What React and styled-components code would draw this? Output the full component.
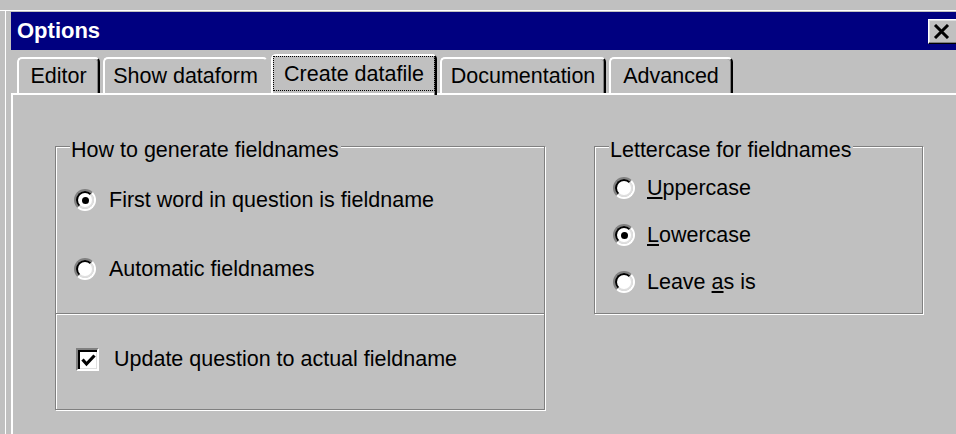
import React from 'react';
import styled, { createGlobalStyle } from 'styled-components';

const GlobalStyle = createGlobalStyle`
  html, body {
    margin: 0;
    padding: 0;
    background: #c0c0c0;
  }
  body {
    font-family: "Liberation Sans", Arial, sans-serif;
    font-size: 21.5px;
    color: #000;
  }
`;

const Window = styled.div`
  width: 956px;
  height: 434px;
  box-sizing: border-box;
  overflow: hidden;
  padding: 12px 0 0 11px;
  background: #c0c0c0;
  box-shadow: inset 0 10px #c0c0c0, inset 0 11px #fff, inset 5px 0 #c0c0c0,
    inset 6px 0 #fff;
  display: flex;
  flex-direction: column;
`;

const TitleBar = styled.div`
  height: 38px;
  flex: none;
  background: #000080;
  display: flex;
  align-items: center;
  justify-content: space-between;
  padding-left: 6px;
`;

const Title = styled.span`
  color: #fff;
  font-weight: bold;
  font-size: 22px;
`;

const CloseButton = styled.div`
  width: 31px;
  height: 25px;
  box-sizing: border-box;
  margin-right: -3px;
  background: #c0c0c0;
  border: 1px solid;
  border-color: #fff #000 #000 #fff;
  box-shadow: inset -1px -1px #808080, inset 1px 1px #dfdfdf;
  display: flex;
  align-items: center;
  justify-content: center;
  padding-right: 4px;
`;

const TabRow = styled.div`
  height: 43px;
  flex: none;
  display: flex;
  align-items: flex-end;
  gap: 3px;
  padding-left: 6px;
`;

const Tab = styled.div`
  position: relative;
  z-index: 1;
  width: ${(p) => p.$w}px;
  height: ${(p) => (p.$active ? 41 : 36)}px;
  margin-bottom: ${(p) => (p.$active ? -2 : 0)}px;
  box-sizing: border-box;
  border-top: 2px solid #fff;
  border-left: 2px solid #fff;
  border-right: 2px solid ${(p) => (p.$open ? '#c0c0c0' : '#000')};
  border-radius: 5px 5px 0 0;
  box-shadow: ${(p) => (p.$open ? 'none' : 'inset -1px 0 #808080')};
  display: flex;
  align-items: ${(p) => (p.$active ? 'stretch' : 'center')};
  justify-content: center;
  line-height: 24px;
  white-space: nowrap;
`;

const FocusRing = styled.span`
  flex: 1;
  height: 35px;
  box-sizing: border-box;
  border: 1px dotted #000;
  display: flex;
  align-items: center;
  justify-content: center;
`;

const Panel = styled.div`
  flex: 1;
  border-top: 2px solid #fff;
  border-left: 2px solid #fff;
  padding: 51px 0 0 42px;
  display: flex;
  align-items: flex-start;
  gap: 49px;
`;

const Column = styled.div`
  display: flex;
  flex-direction: column;
`;

const GroupBox = styled.div`
  width: ${(p) => p.$w}px;
  box-sizing: border-box;
  border: 1px solid #808080;
  border-top: ${(p) => (p.$joined ? 'none' : '1px solid #808080')};
  box-shadow: inset 1px 1px #fff, 1px 1px #fff;
  display: flex;
  flex-direction: column;
  padding: ${(p) => p.$pad};
`;

const Caption = styled.span`
  align-self: flex-start;
  margin: -8px 0 0 14px;
  padding: 0 2px 0 1px;
  background: #c0c0c0;
  line-height: 22px;
  white-space: nowrap;
`;

const OptionList = styled.div`
  display: flex;
  flex-direction: column;
  gap: ${(p) => p.$gap}px;
  padding: ${(p) => p.$pad};
`;

const Option = styled.label`
  display: flex;
  align-items: center;
  gap: ${(p) => p.$gap || 13}px;
  height: 24px;
  line-height: 24px;
  white-space: nowrap;
`;

const RadioOuter = styled.span`
  width: 22px;
  height: 22px;
  box-sizing: border-box;
  border-radius: 50%;
  border: 2px solid;
  border-color: #808080 #fff #fff #808080;
  flex: none;
  display: flex;
`;

const RadioInner = styled.span`
  flex: 1;
  border-radius: 50%;
  border: 2px solid;
  border-color: #000 #dfdfdf #dfdfdf #000;
  background: #fff;
  display: flex;
  align-items: center;
  justify-content: center;

  &::after {
    content: '';
    width: 7px;
    height: 7px;
    border-radius: 50%;
    background: ${(p) => (p.$on ? '#000' : 'transparent')};
  }
`;

const CheckBox = styled.span`
  width: 23px;
  height: 23px;
  box-sizing: border-box;
  flex: none;
  border: 2px solid;
  border-color: #808080 #fff #fff #808080;
  box-shadow: inset 2px 2px #000, inset -1px -1px #dfdfdf;
  background: #fff;
  display: flex;
  align-items: center;
  justify-content: center;
  padding: 2px 0 0 2px;
`;

const Radio = ({ on }) => (
  <RadioOuter>
    <RadioInner $on={on} />
  </RadioOuter>
);

const tabs = [
  { label: 'Editor', w: 83 },
  { label: 'Show dataform', w: 165, open: true },
  { label: 'Create datafile', w: 166, active: true },
  { label: 'Documentation', w: 166 },
  { label: 'Advanced', w: 124 },
];

export default function App() {
  return (
    <>
      <GlobalStyle />
      <Window>
        <TitleBar>
          <Title>Options</Title>
          <CloseButton>
            <svg width="17" height="15" viewBox="0 0 17 15">
              <path d="M2 1 L15 14 M15 1 L2 14" stroke="#000" strokeWidth="3" />
            </svg>
          </CloseButton>
        </TitleBar>

        <TabRow>
          {tabs.map((t) => (
            <Tab key={t.label} $w={t.w} $active={t.active} $open={t.open}>
              {t.active ? <FocusRing>{t.label}</FocusRing> : t.label}
            </Tab>
          ))}
        </TabRow>

        <Panel>
          <Column>
            <GroupBox $w={490} $pad="0 0 32px 0">
              <Caption>How to generate fieldnames</Caption>
              <OptionList $gap={45} $pad="27px 0 0 18px">
                <Option>
                  <Radio on />
                  First word in question is fieldname
                </Option>
                <Option>
                  <Radio />
                  Automatic fieldnames
                </Option>
              </OptionList>
            </GroupBox>
            <GroupBox $w={490} $joined $pad="33px 0 38px 20px">
              <Option $gap={15}>
                <CheckBox>
                  <svg width="15" height="13" viewBox="0 0 15 13">
                    <path
                      d="M1.5 5.5 L5.5 10 L13.5 1.5"
                      fill="none"
                      stroke="#000"
                      strokeWidth="3.2"
                    />
                  </svg>
                </CheckBox>
                Update question to actual fieldname
              </Option>
            </GroupBox>
          </Column>

          <GroupBox $w={329} $pad="0 0 19px 0">
            <Caption>Lettercase for fieldnames</Caption>
            <OptionList $gap={23} $pad="15px 0 0 18px">
              <Option $gap={12}>
                <Radio />
                <span>
                  <u>U</u>ppercase
                </span>
              </Option>
              <Option $gap={12}>
                <Radio on />
                <span>
                  <u>L</u>owercase
                </span>
              </Option>
              <Option $gap={12}>
                <Radio />
                <span>
                  Leave <u>a</u>s is
                </span>
              </Option>
            </OptionList>
          </GroupBox>
        </Panel>
      </Window>
    </>
  );
}
